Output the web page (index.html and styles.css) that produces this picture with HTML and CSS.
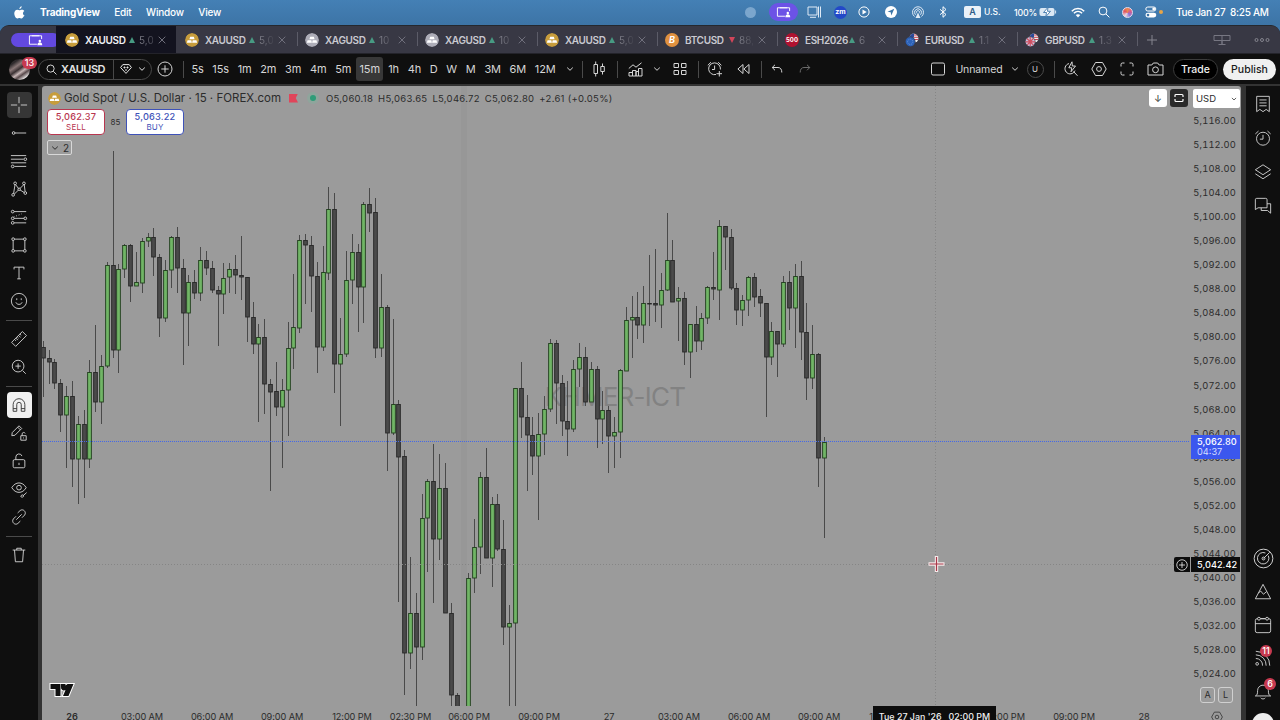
FILE: index.html
```
<!DOCTYPE html>
<html lang="en">
<head>
    <meta charset="UTF-8">
    <meta name="viewport" content="width=device-width, initial-scale=1.0">
    <title>TradingView - XAUUSD</title>
    <link rel="stylesheet" href="styles.css">
</head>
<body>
<svg class="sprite" width="0" height="0">
    <symbol id="share" viewBox="0 0 16 12"><path d="M14.5 5V1.5h-13v9h8M4 1.5h8" /><circle cx="12.6" cy="7" r="1.3" fill="currentColor" stroke="none"/><path d="M10 11.5c0-4 5.200-4 5.200 0z" fill="currentColor" stroke="none"/></symbol>
    <symbol id="bars" viewBox="0 0 14 14"><circle cx="7" cy="7" r="7" fill="var(--coin)" stroke="none"/><path d="M5.200 3.800h3.600l.8 2.500H4.400zM2.600 7.300h3.700l.6 2.400H1.800zM7.700 7.300h3.700l.8 2.400H7.100z" fill="#fff" stroke="none"/></symbol>
    <symbol id="chev" viewBox="0 0 8 8"><path d="M1.200 2.600 4 5.300l2.800-2.700"/></symbol>
    <symbol id="close" viewBox="0 0 8 8"><path d="m.7.7 6.600 6.600M7.300.7.700 7.300"/></symbol>
    <symbol id="search" viewBox="0 0 12 12"><circle cx="5" cy="5" r="3.900"/><path d="m8 8 3.400 3.400"/></symbol>
    <symbol id="clock" viewBox="0 0 20 20"><circle cx="10" cy="10.800" r="7.200"/><path d="M10 6.500v4.800H6.500M1.500 5.500 5 2.300M18.500 5.500 15 2.300"/></symbol>
</svg>

<header class="menubar">
    <svg class="apple" viewBox="0 0 12 14"><path d="M8.400.2C8.500 1.700 7.200 3.200 5.900 3.100 5.800 1.800 7 .4 8.400.2zM10.700 11c-.7 1.300-1.500 2.500-2.600 2.500-.9 0-1.200-.5-2.200-.5s-1.400.5-2.200.5C1.900 13.500.3 10.500.3 7.900c0-2.500 1.500-4 3.200-4 1 0 1.800.6 2.500.6.600 0 1.600-.7 2.800-.6.900 0 1.900.5 2.500 1.400-2.300 1.500-1.900 4.300.5 5.200z"/></svg>
    <nav class="menus"><b>TradingView</b><span>Edit</span><span>Window</span><span>View</span></nav>
    <div class="status">
        <i class="rec"></i>
        <span class="pill"><svg width="15" height="12"><use href="#share"/></svg></span>
        <svg class="st-display" viewBox="0 0 14 12"><path d="M10 1H1v8h9zM3 11.300h6M11.500.5v11M13.500.5v11" fill="none" stroke="#dfeaf5"/></svg>
        <span class="zm">zm</span>
        <svg class="st-play" viewBox="0 0 12 12"><circle cx="6" cy="6" r="5.100" fill="none" stroke="#fff"/><path d="m4.500 3.500 4.200 2.500-4.200 2.500z" fill="#fff"/></svg>
        <svg class="st-send" viewBox="0 0 12 12"><circle cx="6" cy="6" r="6" fill="#fff"/><path d="M9.300 2.700 2.500 5.700l3.200.6.6 3.200z" fill="#3c76a9"/></svg>
        <svg class="st-air" viewBox="0 0 14 12"><path d="M3.500 10.500a5.500 5.500 0 1 1 7 0M4.500 8.800a3.500 3.500 0 1 1 5 0M5.500 7.200a1.700 1.700 0 1 1 3 0" fill="none" stroke="#dfeaf5"/><path d="M7 6.500 4.500 12h5z" fill="#dfeaf5"/></svg>
        <svg class="st-bt" viewBox="0 0 8 12"><path d="m1 3.300 6 5.200-3 2.800V.7l3 2.800-6 5.200" fill="none" stroke="#fff"/></svg>
        <span class="kbd">A</span><span class="lang">U.S.</span>
        <span class="pct">100%</span>
        <svg class="st-batt" viewBox="0 0 18 10"><rect x=".5" y="1" width="15" height="8" rx="2" fill="#dbe8f4"/><path d="M16.600 3.500v3" stroke="#dbe8f4"/><path d="M9 .3 4.500 5.500h3L6.800 9.700l4.700-5.400h-3z" fill="#fff" stroke="#3f77aa" stroke-width=".9"/></svg>
        <svg class="st-wifi" viewBox="0 0 14 11"><path d="M.8 4.200c3.500-3.500 8.900-3.500 12.400 0M2.900 6.300c2.400-2.400 5.800-2.400 8.200 0" fill="none" stroke="#fff" stroke-width="1.500"/><path d="M7 10.500 4.700 8.100c1.300-1.200 3.300-1.200 4.600 0z" fill="#fff"/></svg>
        <svg class="st-find"><use href="#search"/></svg>
        <i class="siri"></i>
        <svg class="st-cc" viewBox="0 0 12 12"><rect x=".8" y="1" width="10" height="4" rx="2" fill="none" stroke="#fff"/><circle cx="8.700" cy="3" r="1.400" fill="#fff"/><rect x=".5" y="6.700" width="10.800" height="4.800" rx="2.400" fill="#fff"/><circle cx="3" cy="9.100" r="1.300" fill="#3f77aa"/></svg>
        <i class="amber"></i>
        <span class="date">Tue Jan 27&nbsp; 8:25 AM</span>
    </div>
</header>

<div class="window">
    <div class="tabs">
        <span class="tab-share"><svg width="15" height="12"><use href="#share"/></svg></span>
        <div class="tab active"><svg class="coin gold"><use href="#bars"/></svg><b>XAUUSD</b><i class="up"></i><span>5,0</span><svg class="x"><use href="#close"/></svg></div>
        <div class="tab"><svg class="coin gold"><use href="#bars"/></svg><b>XAUUSD</b><i class="up"></i><span>5,0</span><svg class="x"><use href="#close"/></svg></div>
        <div class="tab"><svg class="coin silver"><use href="#bars"/></svg><b>XAGUSD</b><i class="up"></i><span>10</span><svg class="x"><use href="#close"/></svg></div>
        <div class="tab"><svg class="coin silver"><use href="#bars"/></svg><b>XAGUSD</b><i class="up"></i><span>10</span><svg class="x"><use href="#close"/></svg></div>
        <div class="tab"><svg class="coin gold"><use href="#bars"/></svg><b>XAUUSD</b><i class="up"></i><span>5,0</span><svg class="x"><use href="#close"/></svg></div>
        <div class="tab"><em class="coin btc">B</em><b>BTCUSD</b><i class="down"></i><span>88,</span><svg class="x"><use href="#close"/></svg></div>
        <div class="tab"><em class="coin spx">500</em><b>ESH2026</b><i class="up"></i><span>6</span><svg class="x"><use href="#close"/></svg></div>
        <div class="tab"><svg class="coin" viewBox="0 0 14 14"><circle cx="9" cy="5" r="4.600" fill="#eee"/><path d="M9 .4v4.400H4.500A4.600 4.600 0 0 1 9 .4z" fill="#2c4a9c"/><path d="M9 2h3.500M9 4.300h4.500M9 6.500h4" stroke="#c8404e"/><circle cx="5.200" cy="8.800" r="5" fill="#2c62b8" stroke="#383844" stroke-width=".7"/><circle cx="5.200" cy="8.800" r="2.600" fill="none" stroke="#7aa0dc" stroke-width=".8" stroke-dasharray="1 1"/></svg><b>EURUSD</b><i class="up"></i><span>1.1</span><svg class="x"><use href="#close"/></svg></div>
        <div class="tab"><svg class="coin" viewBox="0 0 14 14"><circle cx="9" cy="5" r="4.600" fill="#eee"/><path d="M9 .4v4.400H4.500A4.600 4.600 0 0 1 9 .4z" fill="#2c4a9c"/><path d="M9 2h3.500M9 4.300h4.500M9 6.500h4" stroke="#c8404e"/><circle cx="5.200" cy="8.800" r="5" fill="#c9c3dc" stroke="#383844" stroke-width=".7"/><path d="M5.200 4v9.600M.4 8.800H10M2 5.500l6.400 6.600M8.400 5.500 2 12.100" stroke="#cf4f60" stroke-width="1.200"/></svg><b>GBPUSD</b><i class="up"></i><span>1.3</span><svg class="x"><use href="#close"/></svg></div>
        <svg class="tab-add" viewBox="0 0 10 10"><path d="M5 0v10M0 5h10"/></svg>
        <svg class="tab-panes" viewBox="0 0 18 12"><path d="M1 1.500h16v5H1zM9 1.500v9M5.500 10.500h7M9 6.500v4"/></svg>
        <svg class="tab-more" viewBox="0 0 16 6"><circle cx="2.500" cy="3" r="1.500"/><circle cx="8" cy="3" r="1.500"/><circle cx="13.500" cy="3" r="1.500"/></svg>
    </div>

    <div class="toolbar">
        <div class="avatar"><i></i><span class="badge">13</span></div>
        <div class="symbol-box"><svg class="ic-search"><use href="#search"/></svg><b>XAUUSD</b><span class="gem"><svg width="12" height="10" viewBox="0 0 12 10"><path d="M2.800.6h6.400L11.400 3.500 6 9.400.6 3.500zM3.500 3.500h2M6.500 3.500h2M4.500 2.500v2M7.500 2.500v2M6 7V5"/></svg><svg width="8" height="8"><use href="#chev"/></svg></span></div>
        <svg class="add" viewBox="0 0 16 16"><circle cx="8" cy="8" r="7"/><path d="M8 4.300v7.400M4.300 8h7.400"/></svg>
        <i class="vsep"></i>
        <div class="frames">
            <span>5s</span><span>15s</span><span>1m</span><span>2m</span><span>3m</span><span>4m</span><span>5m</span><span class="on">15m</span><span>1h</span><span>4h</span><span>D</span><span>W</span><span>M</span><span>3M</span><span>6M</span><span>12M</span>
        </div>
        <svg class="frames-more" width="8" height="8"><use href="#chev"/></svg>
        <div class="tools">
            <i class="vsep"></i>
            <svg width="12" height="16" viewBox="0 0 12 16"><path d="M1 3.500h3.500v9H1zM2.700.5v3M2.700 12.500v3M7.800 5.500h3.500v5H7.800zM9.500 2.500v3M9.500 10.500v3"/></svg>
            <i class="vsep"></i>
            <svg width="15" height="15" viewBox="0 0 15 15"><path d="M1 14V10.500h3.500V14zM4.500 14V8.500H8V14zM8 14V9.500h2.500V14zM10.500 14V6.500H14V14zM.8 6.500 5 2.800l3 2.400 5.500-4.400"/></svg>
            <svg width="8" height="8"><use href="#chev"/></svg>
            <svg width="14" height="14" viewBox="0 0 14 14"><path d="M1 1.500h4.500V5.500H1zM8.500 1.500H13V5.500H8.500zM1 8.500h4.500v4H1zM8.500 8.500H13v4H8.500z"/></svg>
            <i class="vsep"></i>
            <svg width="16" height="16" viewBox="0 0 16 16"><path d="M13.400 8.500A5.900 5.900 0 1 0 9 13.500M7.600 4.500v4H5M.8 4.300 4 1.200M14.400 4.300l-3.200-3.100M12.300 10v5.500M9.500 12.700H15"/></svg>
            <svg width="13" height="12" viewBox="0 0 13 12"><path d="M6 1.500.900 6 6 10.500zM12 1.500 6.900 6 12 10.500z"/></svg>
            <i class="vsep"></i>
            <svg width="12" height="10" viewBox="0 0 12 10"><path d="M4 .8 1.200 3.500 4 6.300M1.200 3.500H7c2.500 0 3.800 1.800 3.800 5"/></svg>
            <svg class="dim" width="12" height="10" viewBox="0 0 12 10"><path d="m8 .8 2.800 2.700L8 6.300M10.800 3.500H5C2.500 3.500 1.200 5.300 1.200 8.500"/></svg>
        </div>
        <div class="right-tools">
            <svg width="16" height="14" viewBox="0 0 16 14"><rect x="1.500" y="1" width="13" height="12" rx="1.500"/></svg>
            <span>Unnamed</span>
            <svg width="8" height="8"><use href="#chev"/></svg>
            <span class="user">U</span>
            <i class="vsep"></i>
            <svg width="16" height="16" viewBox="0 0 16 16"><path d="M6 2.600a5.200 5.200 0 1 0 6 7M10.500 10.500l4 4.300M9 .8 5.800 6.800h3l-.8 4L12.500 5H9.300z"/></svg>
            <svg width="16" height="16" viewBox="0 0 16 16"><path d="M4.500 1.500h7L15.200 8l-3.700 6.500h-7L.8 8z"/><circle cx="8" cy="8" r="2.400"/></svg>
            <svg width="14" height="14" viewBox="0 0 14 14"><path d="M1 4.500V2.500A1.500 1.500 0 0 1 2.500 1h2M9.500 1h2A1.500 1.500 0 0 1 13 2.500v2M13 9.500v2a1.500 1.500 0 0 1-1.500 1.500h-2M4.500 13h-2A1.500 1.500 0 0 1 1 11.500v-2"/></svg>
            <svg width="17" height="14" viewBox="0 0 17 14"><path d="M1 3h3.800L6.300 1h4.400l1.500 2H16v10H1z"/><circle cx="8.500" cy="7.800" r="2.900"/></svg>
        </div>
        <button class="trade">Trade</button>
        <button class="publish">Publish</button>
    </div>

    <div class="main">
        <aside class="left">
            <div class="cell on-dark"><svg viewBox="0 0 20 20"><path d="M10 1v7M10 12v7M1 10h7M12 10h7"/></svg></div>
            <div class="cell"><svg viewBox="0 0 20 20"><circle cx="4" cy="10" r="1.500"/><path d="M5.500 10H18"/></svg></div>
            <div class="cell"><svg viewBox="0 0 20 20"><path d="M1 4h17M1 8h14M5 16h13M1 12h17"/><circle cx="17" cy="8" r="1.500"/><circle cx="3" cy="16" r="1.500"/></svg></div>
            <div class="cell"><svg viewBox="0 0 20 20"><path d="m4 15 1.600-10M6.500 5.500l3 4M11 9.500l4-4M15.800 5l1 8M5 15.500l4.500-4.500M11 11l5 3"/><circle cx="3.500" cy="16.500" r="1.500"/><circle cx="5.700" cy="3.700" r="1.500"/><circle cx="10.200" cy="10.300" r="1.400"/><circle cx="15.500" cy="3.700" r="1.500"/><circle cx="17" cy="14.500" r="1.500"/></svg></div>
            <div class="cell"><svg viewBox="0 0 20 20"><path d="M4.500 4H18M4.500 11.500h11M4.500 16.500H18"/><path d="m4 10 9-3.500" stroke-dasharray="1 2"/><circle cx="3" cy="4" r="1.500"/><circle cx="3" cy="11.500" r="1.500"/><circle cx="17" cy="11.500" r="1.500"/><circle cx="3" cy="16.500" r="1.500"/></svg></div>
            <div class="cell"><svg viewBox="0 0 20 20"><path d="M5 3.500h10M5 16.500h10M3.500 5v10M16.500 5v10"/><circle cx="3.500" cy="3.500" r="1.500"/><circle cx="16.500" cy="3.500" r="1.500"/><circle cx="3.500" cy="16.500" r="1.500"/><circle cx="16.500" cy="16.500" r="1.500"/></svg></div>
            <div class="cell"><svg viewBox="0 0 20 20"><path d="M4.500 6V3.500h11V6M10 3.500v13M8 16.500h4"/></svg></div>
            <div class="cell"><svg viewBox="0 0 20 20"><circle cx="10" cy="10" r="8.500"/><path d="M7.500 7v2M12.500 7v2M6.500 11.500c1.200 3 5.800 3 7 0"/></svg></div>
            <hr>
            <div class="cell"><svg viewBox="0 0 20 20"><path d="m1.800 13.700 12-12 4.500 4.500-12 12zM5 10.500l1.500 1.500M8 7.500 9.500 9M11 4.500 12.500 6M6.500 9l2.200 2.200M9.500 6l2.200 2.200"/></svg></div>
            <div class="cell"><svg viewBox="0 0 20 20"><circle cx="9" cy="9" r="6.500"/><path d="m14 14 3.500 3.500M9 6v6M6 9h6"/></svg></div>
            <hr>
            <div class="cell on-light"><svg viewBox="0 0 20 20"><path d="M3.500 17V9.500a6.500 6.500 0 0 1 13 0V17h-4V9.500a2.500 2.500 0 0 0-5 0V17zM3.500 14h4M12.500 14h4"/></svg></div>
            <div class="cell"><svg viewBox="0 0 20 20"><path d="m2 13 .5-3.500L10 2l3 3-7.500 7.500zM8.500 3.500l3 3M12 13h6v5h-6zM13.500 13v-2a1.700 1.700 0 0 1 3.300-.5M15 15v1"/></svg></div>
            <div class="cell"><svg viewBox="0 0 20 20"><rect x="3.500" y="8.500" width="13" height="9" rx="1.500"/><path d="M6.500 8.500v-3a3.500 3.500 0 0 1 6.800-1M10 12v2.500"/></svg></div>
            <div class="cell"><svg viewBox="0 0 20 20"><path d="M2 8.500c4-7 12-7 16 0-4 7-12 7-16 0z"/><circle cx="10" cy="8.500" r="2.600"/><path d="m18.500 14-4 3.500M12 18.500c.5-2.500 2.500-2.500 3-1s-1.500 2-3 1z"/></svg></div>
            <div class="cell"><svg viewBox="0 0 20 20"><path d="m8.500 5.500 2.800-2.700c3-2.500 7.500 1.500 5 5l-3 3M11.500 14.500l-2.800 2.700c-3 2.500-7.500-1.500-5-5l3-3M7 13l6-6"/></svg></div>
            <hr>
            <div class="cell"><svg viewBox="0 0 20 20"><path d="M3 4.500h14M7.500 4.500v-2h5v2M5 4.500l1 13h8l1-13"/></svg></div>
        </aside>

        <section class="chart">
            <svg class="plot" id="plot" viewBox="42 86 1148 620">
                <rect x="461" y="86" width="6" height="620" class="session"/>
                <text x="615" y="406" class="watermark">KHMER-ICT</text>
                <g id="candles"></g>
                <path d="M42 441.500H1190" class="last-line"/>
                <path d="M42 564.500H1190M935.500 86V706" class="cross-line"/>
                <path d="M936.500 556v16M928.500 564h16" stroke="#f6eaea" stroke-width="3.400"/>
                <path d="M936.500 557v14M929.500 564h14" stroke="#a8394a" stroke-width="1.200"/>
            </svg>
            <div class="legend">
                <div class="title"><svg class="coin gold"><use href="#bars"/></svg><h1>Gold Spot / U.S. Dollar · 15 · FOREX.com</h1><i class="flag"></i><i class="dot"></i><p><span>O5,060.18</span><span>H5,063.65</span><span>L5,046.72</span><span>C5,062.80</span><span>+2.61 (+0.05%)</span></p></div>
                <div class="deal">
                    <div class="sell"><b>5,062.37</b><span>SELL</span></div>
                    <small>85</small>
                    <div class="buy"><b>5,063.22</b><span>BUY</span></div>
                </div>
                <div class="count"><svg width="8" height="8"><use href="#chev"/></svg>2</div>
            </div>
            <div class="scale-tools"><span class="white">↓</span><span class="black"><svg width="10" height="10" viewBox="0 0 10 10"><path d="M1 4V2.500a1 1 0 0 1 1-1h6a1 1 0 0 1 1 1V4M1 6v1.500a1 1 0 0 0 1 1h6a1 1 0 0 0 1-1V6" stroke-width="1.200"/></svg></span><span class="cur">USD<svg width="6" height="6"><use href="#chev"/></svg></span></div>
            <div class="prices" id="prices"></div>
            <div class="last">5,062.80<span>04:37</span></div>
            <div class="cross"><span><svg width="12" height="12" viewBox="0 0 16 16"><circle cx="8" cy="8" r="7"/><path d="M8 4v8M4 8h8"/></svg></span><b>5,042.42</b></div>
            <svg class="tv" viewBox="0 0 26 16"><path d="M1.500 2H11.500v12H6.500V7H1.500zM12 2h4.500v1.500L18.500 2H24.500l-5 12H14l2.500-6A3 3 0 0 1 12 5z" fill="#111" stroke="#fff" stroke-width="2" paint-order="stroke"/></svg>
            <div class="al"><span>A</span><span>L</span></div>
            <footer class="times">
                <b>26</b><span>03:00 AM</span><span>06:00 AM</span><span>09:00 AM</span><span>12:00 PM</span><span>02:30 PM</span><span>06:00 PM</span><span>09:00 PM</span><span>27</span><span>03:00 AM</span><span>06:00 AM</span><span>09:00 AM</span><span>12:00 PM</span><span></span><span>06:00 PM</span><span>09:00 PM</span><span>28</span>
                <svg width="12" height="12" viewBox="0 0 16 16"><path d="M4.500 1.500h7L15.200 8l-3.700 6.500h-7L.8 8z"/><circle cx="8" cy="8" r="2.400"/></svg>
            </footer>
            <div class="time-tip">Tue 27 Jan '26&nbsp;&nbsp; 02:00 PM</div>
        </section>

        <aside class="right">
            <div class="cell"><svg viewBox="0 0 20 20"><path d="M3 1.500h14v17l-3.500-2.500L10 18.500 6.500 16 3 18.500zM6 5.500h8M6 8.800h8M6 12h8"/></svg></div>
            <div class="cell"><svg viewBox="0 0 20 20"><use href="#clock"/></svg></div>
            <div class="cell"><svg viewBox="0 0 20 20"><path d="m1.500 7.500 8.500-5.500 8.500 5.500-8.500 5.500zM1.500 12l8.500 5.500 8.500-5.500"/></svg></div>
            <div class="cell"><svg viewBox="0 0 20 20"><path d="M1.500 14V3A1.500 1.500 0 0 1 3 1.500h10A1.500 1.500 0 0 1 14.500 3v9H4.500zM8 12v3h7l3.500 3V7.500h-4"/></svg></div>
            <div class="spacer"></div>
            <div class="cell"><svg class="big" viewBox="0 0 22 22"><circle cx="11" cy="11" r="9.800"/><path d="M16 8a6 6 0 1 1-3-2.800M11 11l6.500-6.500"/><circle cx="11" cy="11" r="1.500"/></svg></div>
            <div class="cell"><svg viewBox="0 0 20 20"><path d="m10 1.500 8.500 16h-17zM5 11l2.500-2 3 3.500L14 9.500"/></svg></div>
            <div class="cell"><svg viewBox="0 0 20 20"><rect x="1.500" y="3" width="17" height="15.500" rx="2"/><path d="M1.500 8.500h17M7.500 3h5"/><circle cx="5.500" cy="3" r="1.600" fill="#101010"/><circle cx="14.500" cy="3" r="1.600" fill="#101010"/></svg></div>
            <div class="cell"><svg viewBox="0 0 20 20"><circle cx="3.500" cy="16.500" r="1.500"/><path d="M2 10.500a7.500 7.500 0 0 1 7.500 8M2 6.500a11.500 11.500 0 0 1 11.500 12M2 2.500a15.500 15.500 0 0 1 15.500 16"/></svg><span class="badge">11</span></div>
            <div class="cell"><svg viewBox="0 0 20 20"><path d="M1.500 15.500c2-1 2.500-2 2.500-6a6 6 0 0 1 12 0c0 4 .5 5 2.500 6zM7.500 17.500c.5 1.800 4.500 1.800 5 0"/></svg><span class="badge round">6</span></div>
            <div class="cell help"><i></i></div>
        </aside>
    </div>
</div>
<script src="script.js"></script>
</body>
</html>
```
FILE: script.js
```
// [direction, high, body top, body bottom, low] in plot units, one per 15m bar
const bars = [
    ['d',341,347,358,397],['d',350,358,362,384],['d',359,362,383,389],['d',379,383,415,432],['u',386,396,415,468],
    ['d',381,396,459,487],['u',416,424,459,504],['d',410,424,459,498],['u',360,372,459,468],['d',325,372,402,412],
    ['u',355,366,402,424],['u',262,265,366,368],['d',151,265,350,358],['u',264,269,350,373],['u',244,245,269,278],
    ['d',244,245,286,302],['u',252,282,286,286],['u',238,241,283,293],['u',233,237,241,247],['d',228,237,257,276],
    ['d',254,257,318,337],['u',260,270,318,322],['u',236,237,270,288],['d',227,237,268,293],['d',259,268,313,365],
    ['u',275,282,313,346],['d',270,282,293,299],['u',247,260,293,301],['d',251,260,268,275],['d',261,268,290,293],
    ['d',286,290,294,346],['u',263,278,294,314],['u',263,269,277,293],['d',255,269,275,294],['d',236,275,277,300],
    ['d',277,277,317,342],['d',302,317,344,354],['u',324,337,344,422],['d',319,337,384,414],['d',379,384,392,491],
    ['d',362,391,407,416],['u',379,390,407,468],['u',322,348,390,436],['u',274,327,348,369],['u',235,240,328,333],
    ['d',234,240,245,304],['d',236,245,276,312],['d',262,276,347,373],['u',246,272,347,351],['u',187,209,273,280],
    ['d',193,209,364,393],['u',318,354,364,426],['u',251,280,354,357],['u',234,252,280,304],['d',244,252,287,332],
    ['u',202,204,287,323],['d',188,204,213,232],['d',198,212,348,358],['u',274,307,348,357],['d',305,307,433,471],
    ['u',319,404,433,435],['d',400,404,457,602],['d',450,456,653,695],['u',557,613,653,669],['d',593,613,647,706],
    ['u',494,518,647,660],['u',479,481,518,572],['d',444,481,539,603],['u',454,488,539,560],['d',463,488,613,613],
    ['d',603,613,695,706],['d',693,695,710,710],null,['u',573,578,710,710],['u',519,547,578,593],
    ['u',472,477,547,574],['d',448,477,558,558],['u',497,504,558,587],['d',494,504,549,551],['d',520,549,627,645],
    ['u',605,623,627,706],['u',388,388,623,706],['d',362,388,417,438],['d',395,417,435,491],['d',417,435,456,475],
    ['u',413,434,456,520],['u',396,409,434,455],['u',339,343,409,412],['d',340,343,383,424],['d',375,383,421,436],
    ['d',381,421,429,456],['u',360,369,429,432],['u',343,357,369,387],['d',347,357,402,406],['u',362,369,402,402],
    ['d',366,369,419,448],['u',391,410,419,444],['d',406,410,436,473],['u',417,432,436,468],['u',369,370,432,458],
    ['u',307,320,371,371],['u',296,317,320,358],['d',292,317,325,339],['u',286,303,325,343],['d',255,303,304,326],
    ['d',249,303,305,322],['u',273,290,305,328],['u',213,260,290,291],['d',240,260,302,302],['u',287,298,301,341],
    ['d',292,298,352,365],['u',324,324,352,378],['d',306,324,341,352],['u',313,318,341,350],['u',286,287,318,324],
    ['d',252,287,289,300],['u',220,226,290,320],['d',226,226,237,270],['d',229,237,288,290],['d',283,288,310,325],
    ['u',295,300,310,326],['u',276,277,300,316],['d',273,277,297,307],['d',289,296,303,317],['d',303,303,357,417],
    ['u',322,331,357,365],['d',331,331,344,377],['u',276,282,344,347],['d',271,282,308,330],['u',264,276,308,348],
    ['d',261,276,332,360],['d',303,332,378,400],['u',325,354,378,389],['d',353,354,458,487],['u',437,442,458,538]
];

const firstX = 43.2;
const step = 5.83;

document.getElementById('candles').innerHTML = bars.map((bar, i) => {
    if (!bar) return '';
    const [dir, high, top, bottom, low] = bar;
    const x = Math.floor(firstX + i * step);
    return `<path class="wick" d="M${x + 0.5} ${high}V${low}"/>
        <rect class="${dir}" x="${x - 1.35}" y="${top + 0.5}" width="3.7" height="${Math.max(bottom - top - 0.5, 0.5)}"/>`;
}).join('');

let labels = '';
for (let price = 5116; price >= 5024; price -= 4) {
    labels += `<span>${price.toLocaleString('en-US')}.00</span>`;
}
document.getElementById('prices').innerHTML = labels;
```
FILE: styles.css
```
* { box-sizing: border-box; }
body { margin: 0; width: 1280px; height: 720px; overflow: hidden; background: #3f77aa; font-family: Inter, "Liberation Sans", sans-serif; font-size: 12px; color: #d6d6d6; }
svg { fill: none; stroke: currentColor; flex: none; }
i, em { font-style: normal; flex: none; }
b { font-weight: 600; }
.sprite { position: absolute; }

/* macOS menu bar */
.menubar { height: 25px; display: flex; align-items: center; padding: 0 12px 1px 14px; background: linear-gradient(#4480b5, #3d74a6); color: #fff; font-size: 10px; font-weight: 500; }
.apple { width: 11px; height: 13px; fill: #fff; stroke: none; }
.menus { display: flex; gap: 14.500px; margin-left: 15px; letter-spacing: -.2px; }
.menus b { font-weight: 700; }
.status { margin-left: auto; display: flex; align-items: center; white-space: nowrap; }
.status svg { stroke: none; }
.rec { width: 11px; height: 11px; border-radius: 50%; background: #7ba6cd; }
.pill { width: 29px; height: 18px; margin-left: 13px; border-radius: 9px; background: #6c53e6; display: flex; align-items: center; justify-content: center; }
.status .pill svg { stroke: #fff; }
.st-display { width: 14px; height: 12px; margin-left: 9px; }
.zm { width: 13px; height: 13px; margin-left: 13px; border-radius: 50%; background: #2349c8; font-size: 7px; font-weight: 700; line-height: 12px; text-align: center; }
.st-play { width: 12px; height: 12px; margin-left: 11px; }
.st-send { width: 12px; height: 12px; margin-left: 15px; }
.st-air { width: 14px; height: 12px; margin-left: 14px; }
.st-bt { width: 8px; height: 12px; margin-left: 14px; }
.kbd { width: 17px; height: 12px; margin-left: 17px; border-radius: 2px; background: #eaf1f8; color: #2d5c88; font-size: 9px; font-weight: 600; line-height: 12px; text-align: center; }
.lang { width: 17px; margin-left: 3px; font-size: 8.500px; }
.pct { width: 22px; margin-left: 13px; font-size: 8.800px; letter-spacing: -.2px; }
.st-batt { width: 18px; height: 10px; margin-left: 3px; }
.st-wifi { width: 14px; height: 11px; margin-left: 14px; }
.status .st-find { width: 12px; height: 12px; margin-left: 13px; stroke: #fff; }
.siri { width: 11px; height: 11px; margin-left: 12px; border-radius: 50%; border: 1px solid #e6dcec; background: conic-gradient(#e98a4f, #d65a8c, #8a78d8, #e8d8e4, #e2555e, #e98a4f); }
.st-cc { width: 12px; height: 12px; margin-left: 12px; }
.amber { width: 4px; height: 4px; margin-left: 2px; border-radius: 50%; background: #e8a547; }
.date { width: 92px; margin-left: 13px; font-size: 10px; letter-spacing: -.3px; }

.window { height: 695px; background: #333; border-radius: 9px 9px 0 0; border-top: 1px solid #25282e; overflow: hidden; }

/* layout tabs */
.tabs { height: 27px; display: flex; align-items: center; background: #383844; color: #c9c9d0; }
.tab-share { width: 49px; height: 14px; margin: 0 -4px 0 11px; border-radius: 7px; background: #6349e0; color: #fff; display: flex; align-items: center; justify-content: center; }
.tab { width: 120px; height: 27px; display: flex; align-items: center; padding-left: 9px; position: relative; font-size: 10px; }
.tab + .tab::after { content: ""; position: absolute; right: -2px; top: 6px; width: 1px; height: 14px; background: #5c5c68; }
.tab.active { background: #13131f; color: #f0f0f4; }
.coin { width: 14px; height: 14px; stroke: none; border-radius: 50%; }
.gold { --coin: #c79d3c; }
.silver { --coin: #adadb8; }
.btc { background: #e0913f; color: #fff; font: italic 700 9px/14px Inter, sans-serif; text-align: center; }
.spx { background: #b01230; color: #fff; font: 700 6px/14px Inter, sans-serif; text-align: center; }
.tab b { margin-left: 6px; width: 41px; letter-spacing: -.35px; }
.tab .up, .tab .down { width: 0; height: 0; margin: 0 4px 0 3px; border: 3.500px solid transparent; }
.tab .up { border-top: 0; border-bottom: 6.500px solid #479b83; }
.tab .down { border-bottom: 0; border-top: 6.500px solid #d2455a; }
.tab b:has(+ .up) { white-space: nowrap; }
.tab span { width: 14px; overflow: hidden; white-space: nowrap; color: transparent; background: linear-gradient(90deg, #85858f, #44444f); -webkit-background-clip: text; background-clip: text; font-size: 10px; }
.tab .x { position: absolute; left: 102px; top: 10px; width: 8px; height: 8px; color: #70707c; }
.tab-add { width: 10px; height: 10px; margin-left: 11px; color: #85858f; }
.tab-panes { width: 18px; height: 12px; margin-left: 56px; color: #777782; }
.tab-more { width: 16px; height: 6px; margin-left: 23px; color: #85858f; }

/* chart toolbar */
.toolbar { height: 31px; display: flex; align-items: center; background: #0f0f0f; border-top: 1px solid #23232a; }
.vsep { width: 1px; height: 17px; background: #4a4a4a; }
.avatar { width: 38px; position: relative; }
.avatar i { display: block; width: 21px; height: 21px; margin-left: 9px; border-radius: 50%; background: linear-gradient(145deg, #2e2a2c 20%, #8a7878 35%, #3c3234 48%, #c9b8b8 60%, #594a4c 70%, #e8e4e4 85%); }
.badge { position: absolute; min-width: 15px; height: 12px; padding: 0 2px; border-radius: 6px; background: #c73a50; color: #fff; font-size: 9px; font-weight: 500; line-height: 12px; text-align: center; }
.avatar .badge { left: 22px; top: -2px; }
.symbol-box { width: 114px; height: 21px; display: flex; align-items: center; border: 1px solid #484848; border-radius: 11px; padding-left: 7px; color: #e4e4e4; }
.ic-search { width: 11px; height: 11px; overflow: visible; }
.symbol-box b { width: 52px; margin-left: 4px; font-size: 11px; letter-spacing: -.5px; }
.gem { height: 19px; display: flex; align-items: center; gap: 6px; padding-left: 6px; border-left: 1px solid #484848; }
.add { width: 16px; height: 16px; margin: 0 10px 0 5px; }
.frames { display: flex; align-items: center; width: 379px; margin-left: 3px; font-size: 11px; }
.frames span { padding: 0 4.400px; line-height: 24px; letter-spacing: -.16px; }
.frames .on { padding: 0 3.500px; margin: 0 .5px; border-radius: 3px; background: #383838; }
.tools { display: grid; grid-template-columns: 4px 30px 6px 30px 14px 32px 4px 30px 26px 10px 22px 34px; place-items: center; margin-left: 6px; }
.dim { color: #6c6c6c; }
.right-tools { display: grid; grid-template-columns: 20px 62px 10px 30px 8px 26px 30px 26px 30px; place-items: center; margin-left: auto; font-size: 10.500px; }
.right-tools span { letter-spacing: -.1px; }
.user { width: 17px; height: 17px; border: 1px solid #4a4a4a; border-radius: 50%; font-size: 8px; line-height: 15px; text-align: center; }
button { height: 21px; padding: 0; border-radius: 11px; font: 500 10.500px Inter, sans-serif; }
.trade { width: 45px; margin-left: 3px; background: #000; color: #f0f0f0; border: 1px solid #3c3c3c; }
.publish { width: 53px; margin: 0 4px 0 5px; background: #f0f0f0; color: #1a1a1a; border: 0; }

.main { height: 636px; margin-top: 2px; display: flex; }
.cell { display: flex; align-items: center; justify-content: center; position: relative; }
.cell svg { position: relative; width: 18px; height: 18px; }
.left { width: 38px; margin-right: 4px; padding-top: 5px; background: #0f0f0f; }
.left .cell { height: 28px; }
.on-dark::before, .on-light::before { content: ""; position: absolute; left: 7px; top: 1px; width: 25px; height: 26px; border-radius: 4px; background: #363636; }
.on-light::before { background: #f0f0f0; }
.on-light { color: #333; }
.left hr { height: 1px; margin: 5px 6px 4px; border: 0; background: #4a4a4a; }
.right { width: 34px; margin-left: auto; padding-top: 1px; display: flex; flex-direction: column; background: #0f0f0f; }
.right .cell { height: 34px; flex: none; }
.right .big { width: 21px; height: 21px; }
.spacer { flex: none; height: 319px; }
.spacer ~ .cell { height: 33.200px; }
.right .badge { left: 14px; top: 3px; min-width: 12px; }
.right .round { left: 18px; }
.help i { width: 22px; height: 22px; margin-top: -1px; border-radius: 50%; background: #eee; }

/* chart */
.chart { width: 1199px; height: 636px; position: relative; background: #9b9b9b; border-radius: 3px 3px 0 0; color: #2c2c2c; display: grid; grid-template-columns: 1148px 51px; grid-template-rows: 620px 16px; }
.plot { width: 1148px; height: 620px; grid-area: 1 / 1; }
.session { fill: #979797; stroke: none; }
.watermark { font-size: 26px; text-anchor: middle; letter-spacing: -.75px; fill: #828282; stroke: none; }
.wick { stroke: #4a4a4a; }
.u { fill: #71b566; stroke: #203c1c; stroke-width: .9; }
.d { fill: #4a4a4a; stroke: #272727; stroke-width: .9; }
.last-line { stroke: #4468e8; stroke-dasharray: 1 1; }
.cross-line { stroke: #858585; stroke-dasharray: 1 2; }
.legend { position: absolute; left: 5px; top: 5px; }
.title { height: 14px; display: flex; align-items: center; }
.title .coin { width: 13px; height: 13px; margin-left: 1px; }
.title h1 { margin: 0 0 0 3px; width: 217px; font-size: 11.500px; font-weight: 400; white-space: nowrap; }
.flag { width: 9px; height: 9px; margin-left: 8px; background: #e0455a; clip-path: polygon(0 0, 100% 0, 75% 50%, 100% 100%, 0 100%); }
.dot { width: 6px; height: 6px; margin-left: 12px; border-radius: 50%; background: #2f9c78; box-shadow: 0 0 0 3px #8fa59c; }
.title p { margin: 0 0 0 10px; display: flex; gap: 5px; font-size: 9.500px; letter-spacing: .28px; white-space: nowrap; }
.deal { display: flex; align-items: center; margin-top: 4px; }
.deal div { width: 58px; height: 26px; padding-top: 2px; border: 1px solid; border-radius: 4px; background: #fff; text-align: center; line-height: 10px; }
.deal b, .deal span { display: block; font-size: 9.200px; letter-spacing: .2px; }
.deal b { font-weight: 500; }
.deal span { font-size: 8px; }
.sell { color: #b8364f; }
.buy { color: #3e52b8; }
.deal small { width: 21px; text-align: center; font-size: 8px; }
.count { display: flex; align-items: center; gap: 4px; width: 25px; height: 15px; margin-top: 5px; padding-left: 3px; border: 1px solid #d8d8d8; border-radius: 2px; font-size: 10px; }
.scale-tools { position: absolute; right: 0; top: 3px; display: flex; gap: 3px; font-size: 9.500px; }
.scale-tools span { width: 18px; height: 18px; border-radius: 3px; display: flex; align-items: center; justify-content: center; }
.white { background: #fff; }
.black { background: #2a2a2a; color: #fff; }
.scale-tools .cur { width: 47px; height: 19px; margin: 0 1px 0 2px; justify-content: space-between; padding: 0 3px; background: #fff; border-radius: 2px; }
.prices { padding: 23px 5px 0 0; display: flex; flex-direction: column; font-size: 9.300px; letter-spacing: .2px; text-align: right; font-variant-numeric: tabular-nums; }
.prices span { flex: none; height: 24.060px; line-height: 24px; }
.last { position: absolute; left: 1149px; top: 349px; width: 49px; height: 24px; padding: 2px 0 0 6px; background: #3b57ee; color: #fff; font-size: 9.200px; font-weight: 500; line-height: 10px; }
.last span { display: block; color: #d5dcff; font-weight: 400; }
.cross { position: absolute; left: 1132px; top: 471px; display: flex; gap: 1px; color: #fff; font-size: 9.200px; line-height: 15px; }
.cross span { width: 16px; height: 15px; display: flex; align-items: center; justify-content: center; background: #0d0d0d; border-radius: 2px 0 0 2px; }
.cross b { width: 49px; padding-left: 6px; background: #0d0d0d; font-weight: 500; }
.tv { position: absolute; left: 7px; top: 596px; width: 26px; height: 16px; stroke: none; }
.al { position: absolute; right: 8px; top: 601px; display: flex; gap: 3px; }
.al span { width: 15px; height: 16px; border: 1px solid #d0d0d0; border-radius: 3px; font-size: 9px; line-height: 14px; text-align: center; }
.times { grid-column: 1 / 3; height: 16px; overflow: hidden; display: grid; grid-template-columns: repeat(5, 70px) 47px repeat(7, 70px) 45px repeat(3, 70px) 76px; margin-left: -5px; justify-items: center; font-size: 9.200px; line-height: 21px; white-space: nowrap; }
.times span { letter-spacing: -.1px; }
.times svg { margin-top: 5px; }
.time-tip { position: absolute; left: 831px; top: 620px; width: 123px; height: 16px; background: #0d0d0d; color: #f0f0f0; font-size: 8.900px; font-weight: 500; line-height: 21px; text-align: center; white-space: nowrap; }
```
